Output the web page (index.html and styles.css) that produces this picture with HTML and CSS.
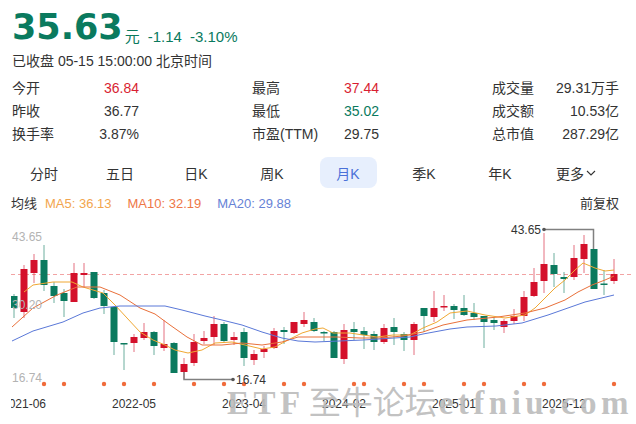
FILE: index.html
```html
<!DOCTYPE html>
<html lang="zh-CN">
<head>
    <meta charset="UTF-8">
    <meta name="viewport" content="width=device-width, initial-scale=1.0">
    <title>35.63 月K</title>
    <link rel="stylesheet" href="styles.css">
</head>
<body>
    <div class="quote">
        <div class="price-row">
            <span class="price">35.63</span><span class="unit">元</span><span class="chg">-1.14</span><span class="chg">-3.10%</span>
        </div>
        <div class="status">已收盘 05-15 15:00:00 北京时间</div>
        <div class="stats">
            <div class="stat"><span>今开</span><span class="up">36.84</span></div>
            <div class="stat"><span>最高</span><span class="up">37.44</span></div>
            <div class="stat"><span>成交量</span><span>29.31万手</span></div>
            <div class="stat"><span>昨收</span><span>36.77</span></div>
            <div class="stat"><span>最低</span><span class="down">35.02</span></div>
            <div class="stat"><span>成交额</span><span>10.53亿</span></div>
            <div class="stat"><span>换手率</span><span>3.87%</span></div>
            <div class="stat"><span>市盈(TTM)</span><span>29.75</span></div>
            <div class="stat"><span>总市值</span><span>287.29亿</span></div>
        </div>
    </div>

    <div class="tabs">
        <div class="tab">分时</div>
        <div class="tab">五日</div>
        <div class="tab">日K</div>
        <div class="tab">周K</div>
        <div class="tab active">月K</div>
        <div class="tab">季K</div>
        <div class="tab">年K</div>
        <div class="tab">更多<svg class="caret" width="10" height="6" viewBox="0 0 10 6"><polyline points="1,1 5,5 9,1" fill="none" stroke="#333" stroke-width="1.1"/></svg></div>
    </div>

    <div class="ma-row">
        <span class="ma-title">均线</span>
        <span class="ma5">MA5: 36.13</span>
        <span class="ma10">MA10: 32.19</span>
        <span class="ma20">MA20: 29.88</span>
        <span class="adjust">前复权</span>
    </div>

    <div class="chart">
        <svg id="kline" width="636" height="211" viewBox="0 213 636 211">
            <defs>
                <clipPath id="plot"><rect x="11" y="213" width="625" height="211"/></clipPath>
            </defs>
            <g clip-path="url(#plot)">
                <line x1="11" y1="274.5" x2="632" y2="274.5" class="last-line"/>
                <g id="candles"></g>
                <polyline class="ma-line l5" points="24,292 33,285 53,282 72,282 83,287 93,290 103,293 115,305 127,318 140,332 153,340 165,345 175,350 188,353 202,350 215,343 232,342 245,345 262,349 275,347 288,340 302,333 315,329 323,328 333,333 350,333 363,335 377,337 393,335 410,335 423,328 437,322 450,313 467,311 485,315 505,318 525,315 535,308 545,298 555,288 565,280 575,270 583,263 595,268 605,271 614,270"/>
                <polyline class="ma-line l10" points="12,327 33,308 57,295 77,287 100,287 120,295 140,308 155,314 170,325 187,337 202,345 222,345 242,343 262,345 282,342 298,337 315,337 337,337 360,338 380,338 403,336 423,332 443,325 467,320 498,317 525,313 545,308 565,300 578,292 592,285 605,280 614,276"/>
                <polyline class="ma-line l20" points="12,341 33,331 63,322 83,313 100,308 120,306 140,306 165,306 182,310 205,316 222,320 242,325 262,332 282,338 298,341 315,342 363,340 410,337 423,334 450,329 467,327 496,326 522,323 548,315 585,302 614,295"/>
                <g id="dots"></g>
                <g id="xlabels" class="xlabel"></g>
            </g>
            <text x="12" y="240.5" class="axis">43.65</text>
            <text x="12" y="308.5" class="axis">30.20</text>
            <text x="12" y="382" class="axis">16.74</text>

            <polyline points="544,229.5 593.5,229.5 593.5,249" class="mark-line"/>
            <circle cx="544" cy="229.5" r="1.8" fill="#555"/>
            <text x="541" y="234" text-anchor="end" class="mark">43.65</text>

            <polyline points="184,372 184,379.5 233,379.5" class="mark-line"/>
            <circle cx="233" cy="379.5" r="1.8" fill="#555"/>
            <text x="236" y="384" class="mark">16.74</text>
        </svg>
        <div class="watermark"><span class="wm-latin">ETF</span><span class="wm-cjk">至牛论坛</span><span class="wm-latin">etfniu.com</span></div>
    </div>

    <script>
        // [bodyTop, bodyBottom, wickTop, wickBottom, up]
        const candles = [
            [296,308,294,318,0], [269,312,265,318,1], [260,273,254,283,1], [260,285,245,291,0],
            [286,296,282,303,0], [293,301,289,317,0], [273,302,263,302,1], [273,275,263,287,1],
            [272,298,272,299,0], [293,306,290,314,0], [307,342,307,355,0], [343,344,343,370,0],
            [337,343,334,352,1], [332,338,323,340,1], [332,346,331,355,0], [344,348,320,351,1],
            [343,373,342,373,0], [364,372,358,379,1], [342,363,334,366,1], [338,341,331,344,1],
            [324,337,316,345,1], [324,341,322,342,0], [337,340,332,345,1], [332,358,328,366,0],
            [354,360,350,365,1], [349,352,346,358,1], [331,348,328,349,1], [330,332,327,344,0],
            [322,333,322,334,1], [320,324,312,327,1], [322,331,318,332,0], [332,333,331,341,0],
            [332,358,331,358,0], [330,359,324,364,1], [329,332,322,340,0], [331,335,327,349,0],
            [334,342,331,350,0], [328,342,324,344,1], [327,332,318,345,0], [334,340,332,351,0],
            [324,340,322,355,1], [308,316,308,332,0], [308,317,291,322,1], [306,307.5,295,311,1],
            [306,310,304,319,0], [308,315,295,316,0], [313,317,303,320,0], [316,322,316,348,0],
            [320,323,317,330,0], [321,327,319,333,1], [316,321,309,324,1], [297,316,291,321,1],
            [282,296,268,297,1], [264,281,233,293,1], [265,274,253,287,0], [277,279,272,293,0],
            [258,277,245,280,1], [244,259,235,273,1], [249,289,249,289,0], [283.5,285,270,295,0],
            [274,281,259,284,1]
        ];
        const dotIdx = [3,5,9,11,14,18,21,23,27,29,34,35,39,41,45,47,51,53,60];
        const labels = {1: "2021-06", 12: "2022-05", 23: "2023-04", 33: "2024-02", 44: "2025-01", 55: "2025-12"};

        const ns = "http://www.w3.org/2000/svg";
        const candleGroup = document.getElementById("candles");
        const dotGroup = document.getElementById("dots");
        const labelGroup = document.getElementById("xlabels");

        function el(name, attrs) {
            const node = document.createElementNS(ns, name);
            for (const key in attrs) node.setAttribute(key, attrs[key]);
            return node;
        }

        candles.forEach(function (c, i) {
            const x = 14 + i * 10;
            const cls = c[4] ? "up" : "down";
            candleGroup.appendChild(el("line", {x1: x, x2: x, y1: c[2], y2: c[3], "class": "wick " + cls}));
            candleGroup.appendChild(el("rect", {x: x - 3.5, y: c[0], width: 7, height: Math.max(c[1] - c[0], 1.5), "class": "body " + cls}));
        });

        dotIdx.forEach(function (i) {
            dotGroup.appendChild(el("circle", {cx: 14 + i * 10, cy: 384, r: 2.2, fill: "#f06b3b"}));
        });

        for (const i in labels) {
            const t = el("text", {x: 14 + i * 10, y: 407.5, "text-anchor": "middle"});
            t.textContent = labels[i];
            labelGroup.appendChild(t);
        }
    </script>
</body>
</html>
```

FILE: styles.css
```css
body {
    margin: 0;
    width: 636px;
    height: 424px;
    overflow: hidden;
    background: #fff;
    color: #333;
    font-family: "Liberation Sans", Arial, "Noto Sans CJK SC", sans-serif;
}

.quote {
    padding: 0 12px;
}

.price-row {
    margin-top: 9px;
    height: 36px;
    line-height: 36px;
    color: #0a7a5e;
    white-space: nowrap;
}
.price {
    font-family: "DejaVu Sans", sans-serif;
    font-weight: bold;
    font-size: 35px;
}
.unit {
    margin-left: 2px;
    font-size: 15px;
    vertical-align: -3px;
}
.chg {
    margin-left: 8px;
    font-size: 15px;
    vertical-align: -3px;
}

.status {
    margin-top: 6px;
    font-size: 14px;
    line-height: 20px;
}

.stats {
    display: grid;
    grid-template-columns: repeat(3, 127px);
    column-gap: 113px;
    margin-top: 6px;
    font-size: 14px;
    line-height: 23px;
}
.stat {
    display: flex;
    justify-content: space-between;
}
.up {
    color: #d81e32;
}
.down {
    color: #0a7a5e;
}

.tabs {
    display: grid;
    grid-template-columns: repeat(8, 76px);
    margin: 11px 0 0 6px;
}
.tab {
    justify-self: center;
    display: flex;
    align-items: center;
    justify-content: center;
    width: 57px;
    height: 31px;
    border-radius: 8px;
    font-size: 14px;
}
.tab.active {
    background: #e7effd;
    color: #4a70d8;
}
.caret {
    margin-left: 2px;
}

.ma-row {
    display: flex;
    margin-top: 7px;
    padding: 0 17px 0 11px;
    font-size: 13px;
    line-height: 18px;
}
.ma5 {
    margin-left: 8px;
    color: #f2a54e;
}
.ma10 {
    margin-left: 16px;
    color: #ee7747;
}
.ma20 {
    margin-left: 16px;
    color: #6682d6;
}
.adjust {
    margin-left: auto;
}

.chart {
    position: relative;
}
#kline {
    display: block;
    font-family: "Liberation Sans", Arial, sans-serif;
}
.last-line {
    stroke: #f2a3a3;
    stroke-dasharray: 4 3;
}
.wick {
    stroke-width: 1;
    stroke-opacity: 0.6;
}
.wick.up {
    stroke: #d4102b;
}
.wick.down {
    stroke: #0b7a5e;
}
.body.up {
    fill: #d4102b;
}
.body.down {
    fill: #0b7a5e;
}
.ma-line {
    fill: none;
    stroke-width: 1;
}
.l5 {
    stroke: #f0a833;
}
.l10 {
    stroke: #e9703a;
}
.l20 {
    stroke: #5a78d8;
}
.axis {
    font-size: 12px;
    fill: #b3b3b3;
}
.mark {
    font-size: 12px;
    fill: #333;
}
.mark-line {
    fill: none;
    stroke: #808080;
    stroke-width: 1.5;
}
.xlabel {
    font-size: 12px;
    fill: #333;
}

.watermark {
    position: absolute;
    left: 227px;
    top: 164px;
    display: flex;
    align-items: baseline;
    color: rgba(188, 188, 188, 0.92);
    white-space: nowrap;
    pointer-events: none;
}
.wm-latin {
    font-family: "Liberation Serif", "Times New Roman", serif;
    font-weight: bold;
    font-size: 33px;
    letter-spacing: 4.5px;
}
.wm-cjk {
    margin: 0 2px 0 4px;
    font-family: "Noto Sans CJK SC", sans-serif;
    font-size: 32px;
}
```
